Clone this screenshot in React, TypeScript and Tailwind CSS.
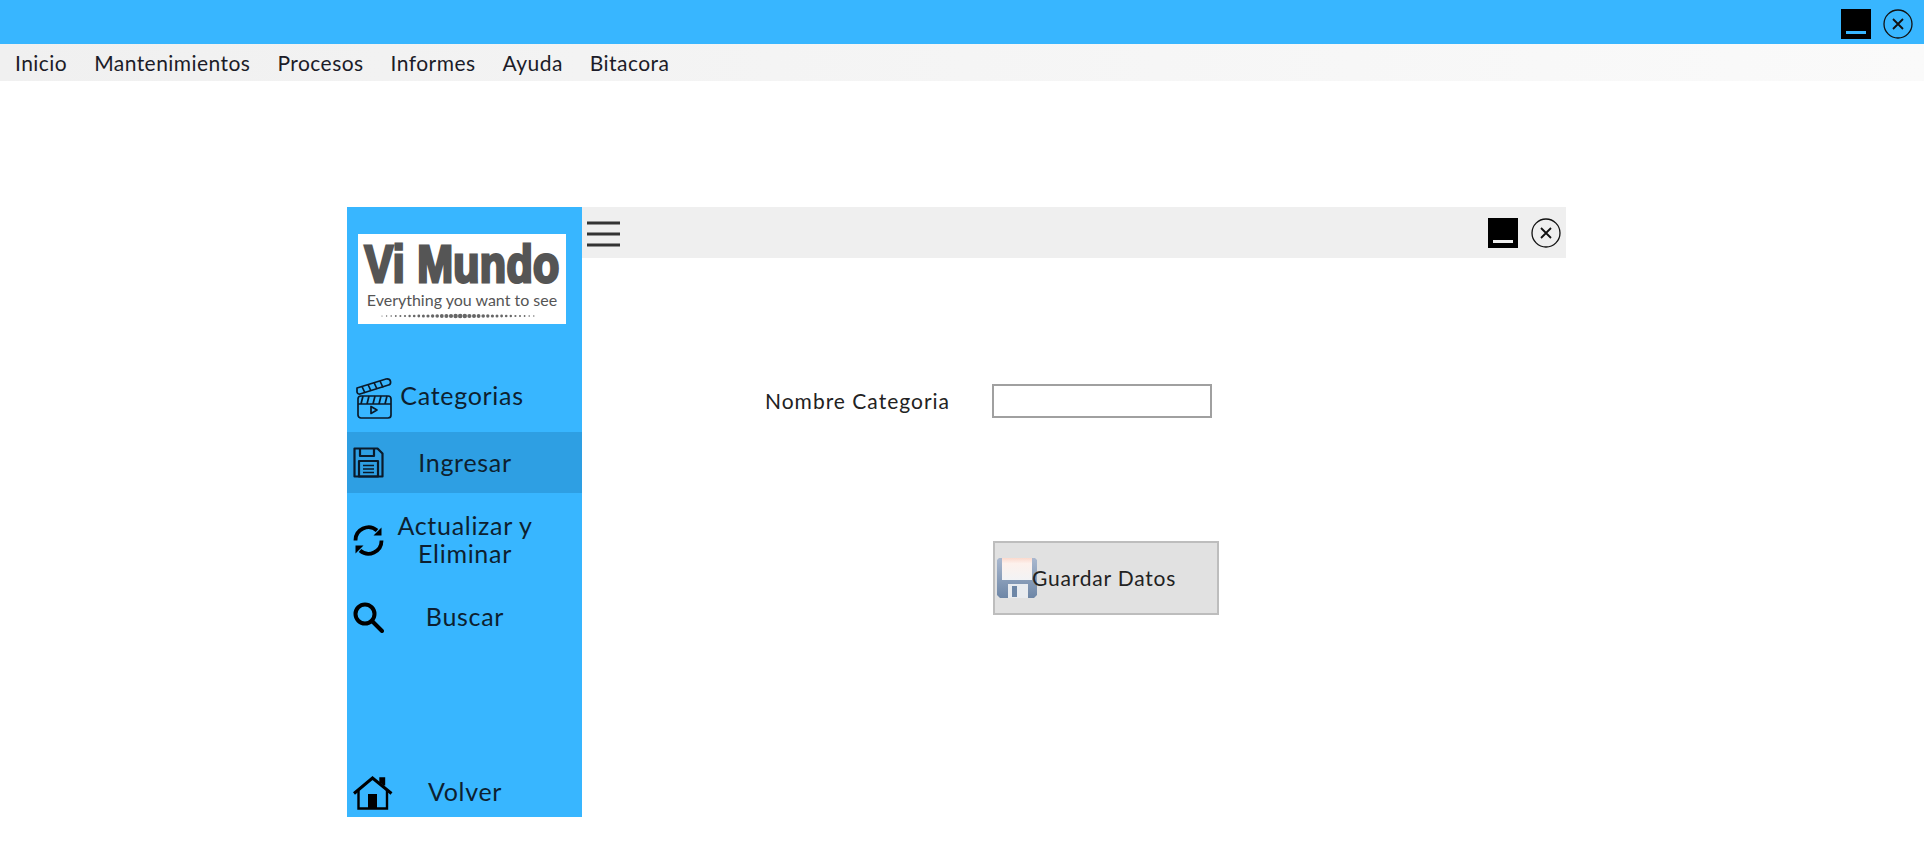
import * as React from "react"

const menuItems = ["Inicio", "Mantenimientos", "Procesos", "Informes", "Ayuda", "Bitacora"]

const MinimizeIcon = ({ bar }: { bar: string }) => (
  <svg width="30" height="30" viewBox="0 0 30 30" className="shrink-0">
    <rect width="30" height="30" fill="#000" />
    <rect x="5" y="22" width="20" height="3" fill={bar} />
  </svg>
)

const CloseIcon = () => (
  <svg width="30" height="30" viewBox="0 0 30 30" fill="none" stroke="#111" className="shrink-0">
    <circle cx="15" cy="15" r="14" strokeWidth="1.300" />
    <path d="M10 10l10 10M20 10l-10 10" strokeWidth="1.800" />
  </svg>
)

const ClapperIcon = () => (
  <svg width="36" height="41" viewBox="0 0 36 41" fill="none" stroke="#0a1a2a" strokeWidth="1.700" strokeLinejoin="round">
    <rect x="2" y="18" width="33" height="22" rx="3" />
    <path d="M2 26h33M7 18l-2 8M13 18l-2 8M19 18l-2 8M25 18l-2 8M31 18l-2 8" />
    <path d="M1 10L30 1q4-.5 4.500 2.500t-2 3.500L4 16q-2.500.5-3-2z" />
    <path d="M6 8.500l3 6.500M12 6.500l3 6.500M18 4.500l3 6.500M24 3l3 6.500" />
    <path d="M15 28.500v7l6-3.500z" />
  </svg>
)

const FloppyIcon = () => (
  <svg width="31" height="31" viewBox="0 0 31 31" fill="none" stroke="#0a1a2a" strokeWidth="2.200" strokeLinejoin="round">
    <path d="M1.500 1.500h23l5 5v23h-28z" />
    <path d="M7 1.500v7.500h14V1.500" />
    <rect x="6" y="14" width="19" height="15.500" />
    <path d="M10 18.500h11M10 22h11M10 25.500h11" strokeWidth="1.600" />
  </svg>
)

const RefreshIcon = () => (
  <svg width="31" height="31" viewBox="0 0 31 31" fill="none" className="shrink-0">
    <path d="M2.500 15.500A13 13 0 0 1 24 5.500M28.500 15.500A13 13 0 0 1 7 25.500" stroke="#000" strokeWidth="3.800" />
    <path d="M28.500 2.500v8h-8zM2.500 28.500v-8h8z" fill="#000" />
  </svg>
)

const SearchIcon = () => (
  <svg width="31" height="31" viewBox="0 0 31 31" fill="none" stroke="#000" className="shrink-0">
    <circle cx="12" cy="12" r="9.500" strokeWidth="4" />
    <path d="M19 19l10 10" strokeWidth="4" strokeLinecap="round" />
  </svg>
)

const HomeIcon = () => (
  <svg width="40" height="35" viewBox="0 0 40 35" fill="none" stroke="#000" strokeWidth="2.400">
    <path d="M1 18.500L19.500 3 38.500 18.500" strokeWidth="3" />
    <path d="M5.500 15.500V33.500H34V15.500" />
    <path d="M27.500 8V3.500h3.500v7" fill="#000" />
    <rect x="15" y="19" width="9" height="14.500" fill="#000" stroke="none" />
  </svg>
)

const DiskIcon = () => (
  <svg width="40" height="40" viewBox="0 0 40 40" className="shrink-0">
    <defs>
      <linearGradient id="disk-body" x1="0" y1="0" x2="0" y2="1">
        <stop offset="0" stopColor="#a9b8cf" />
        <stop offset="1" stopColor="#6d86a6" />
      </linearGradient>
      <linearGradient id="disk-label" x1="0" y1="0" x2="0" y2="1">
        <stop offset="0" stopColor="#fbd9cd" />
        <stop offset="0.25" stopColor="#fdf1ec" />
        <stop offset="1" stopColor="#f2f3f5" />
      </linearGradient>
    </defs>
    <path d="M2 0h36l2 2v35l-3 3H3l-3-3V2z" fill="url(#disk-body)" />
    <rect x="5" y="0" width="30" height="22" fill="url(#disk-label)" />
    <rect x="11" y="26" width="20" height="14" fill="#e8ebef" />
    <rect x="15" y="28" width="5" height="11" fill="#6d86a6" />
  </svg>
)

const dots = Array.from({ length: 34 }, (_, i) => {
  const d = Math.abs(i - 17) / 17
  return { cx: 5 + i * 4.6, r: 0.6 + (1 - d) * 1.700 }
})

const Logo = () => (
  <div className="mx-[11px] flex h-[90px] w-[208px] flex-col items-center bg-white">
    <div className="mt-[6px] h-[47px] origin-top scale-y-[1.2] font-['Liberation_Sans'] text-[43px] leading-[40px] font-bold tracking-[0.3px] whitespace-nowrap text-[#555] [-webkit-text-stroke:2.5px_#555]">
      Vi Mundo
    </div>
    <div className="mt-[3px] h-[20px] font-['Lato'] text-[16px] leading-[20px] whitespace-nowrap text-[#555]">
      Everything you want to see
    </div>
    <svg width="170" height="6" viewBox="0 0 170 6" className="mt-[3px]">
      {dots.map((dot) => (
        <circle key={dot.cx} cx={dot.cx} cy="3" r={dot.r} fill="#666" />
      ))}
    </svg>
  </div>
)

const SideRow = ({
  icon,
  className,
  children,
}: {
  icon: React.ReactNode
  className?: string
  children: React.ReactNode
}) => (
  <div className={`flex items-center pl-[6px] text-center text-[#0d1f30] ${className ?? ""}`}>
    <div className="flex w-[40px] shrink-0">{icon}</div>
    <div className="-mt-[2px] flex-1 pr-[45px] tracking-[0.7px] whitespace-pre-line">{children}</div>
  </div>
)

export default function App() {
  return (
    <div className="h-[848px] overflow-hidden bg-white font-['Lato',sans-serif]">
      <div className="flex h-[44px] items-start justify-end gap-[12px] bg-[#38b6ff] pt-[9px] pr-[11px]">
        <MinimizeIcon bar="#38b6ff" />
        <CloseIcon />
      </div>
      <nav className="flex h-[37px] items-center gap-[27px] bg-gradient-to-r from-[#f0f0f0] to-[#fafafa] pl-[15px] text-[21px] tracking-[0.45px] text-[#1c1c28]">
        {menuItems.map((item) => (
          <span key={item}>{item}</span>
        ))}
      </nav>

      <div className="mt-[126px] ml-[347px] flex h-[610px] w-[1219px]">
        <aside className="flex w-[235px] shrink-0 flex-col bg-[#38b6ff] pt-[27px] text-[25px] leading-[28px]">
          <Logo />
          <SideRow icon={<ClapperIcon />} className="mt-[44px] h-[60px] !pl-[9px]">
            <span className="relative -top-[2px] -ml-[9px] block">Categorias</span>
          </SideRow>
          <SideRow icon={<FloppyIcon />} className="mt-[4px] h-[61px] bg-[#2e9fe3]">
            Ingresar
          </SideRow>
          <SideRow icon={<RefreshIcon />} className="mt-[15px] h-[64px]">
            {"Actualizar y\nEliminar"}
          </SideRow>
          <SideRow icon={<SearchIcon />} className="mt-[15px] h-[60px]">
            Buscar
          </SideRow>
          <div className="flex-1" />
          <SideRow icon={<HomeIcon />} className="mb-[5px] h-[40px]">
            Volver
          </SideRow>
        </aside>

        <main className="flex-1">
          <div className="flex h-[51px] items-center justify-between bg-[#efefef] pr-[5px] pl-[4px]">
            <svg width="34" height="28" viewBox="0 0 34 28" stroke="#333" strokeWidth="3" className="mt-[3px]">
              <path d="M1 3h33M1 14h33M1 25h33" />
            </svg>
            <div className="flex items-center gap-[13px]">
              <MinimizeIcon bar="#efefef" />
              <CloseIcon />
            </div>
          </div>

          <div className="flex items-center pt-[126px] pl-[183px]">
            <label className="w-[227px] text-[21px] tracking-[1px] text-[#222]">Nombre Categoria</label>
            <input className="h-[34px] w-[220px] border-2 border-[#a0a0a0] bg-white" />
          </div>

          <button className="mt-[123px] ml-[411px] flex h-[74px] w-[226px] items-center border-2 border-[#bdbdbd] bg-[#e1e1e1] pl-[2px] text-[21px] tracking-[0.8px] text-[#222]">
            <DiskIcon />
            <span className="-ml-[5px] whitespace-nowrap">Guardar Datos</span>
          </button>
        </main>
      </div>
    </div>
  )
}
